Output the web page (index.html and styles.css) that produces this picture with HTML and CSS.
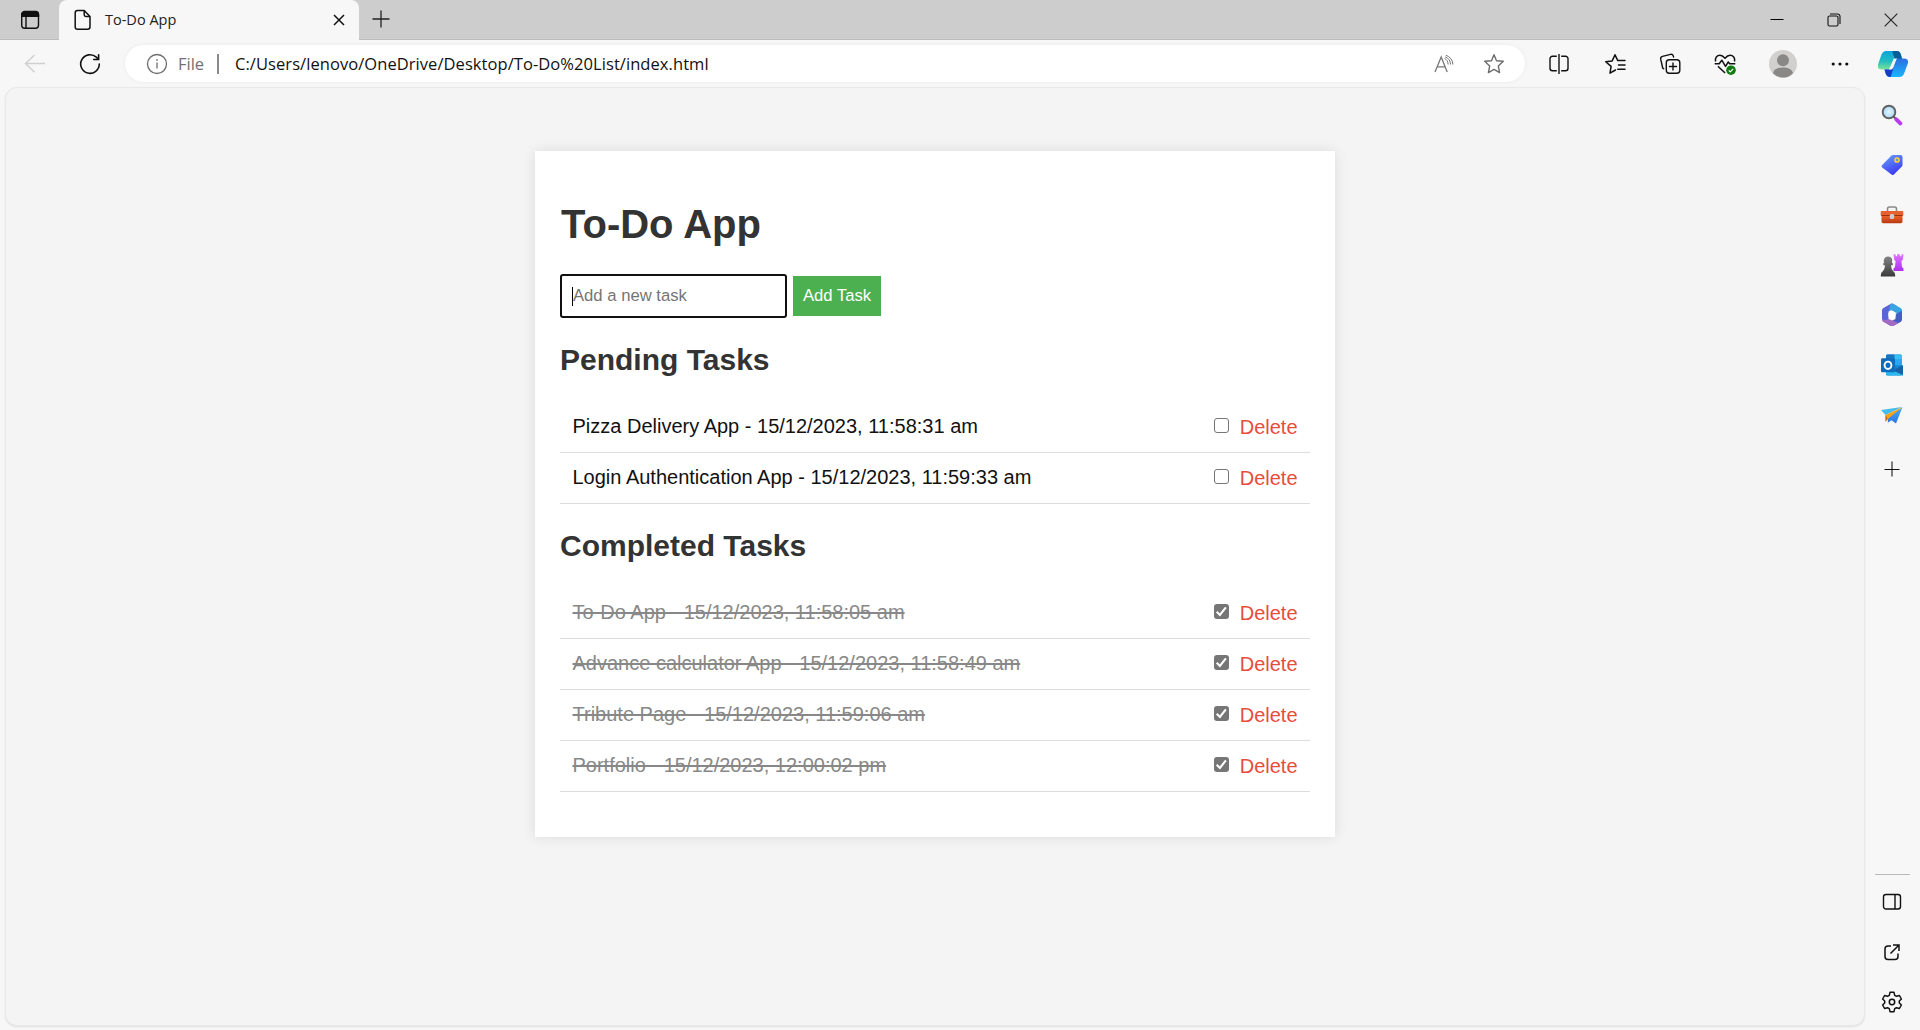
FILE: index.html
```html
<!DOCTYPE html>
<html lang="en">
<head>
<meta charset="utf-8">
<title>To-Do App</title>
<link rel="stylesheet" href="styles.css">
</head>
<body>
<header class="titlebar">
  <div class="tab-actions">
    <svg width="20" height="20" viewBox="0 0 20 20" fill="none" stroke="#111" stroke-width="1.4"><rect x="1.7" y="1.9" width="16.8" height="16.4" rx="3"/><path d="M1.7 6.2V4.5a3 3 0 0 1 3-3h10.800a3 3 0 0 1 3 3v1.700z" fill="#111"/><path d="M6 6v12"/></svg>
  </div>
  <div class="tab">
    <svg width="18" height="22" viewBox="0 0 18 22" fill="none" stroke="#111" stroke-width="1.5" stroke-linejoin="round"><path d="M3.500 1.500H10.200L16 7.500V17.800a2.500 2.500 0 0 1-2.500 2.500h-10A2.300 2.300 0 0 1 1.200 18V3.800a2.300 2.300 0 0 1 2.300-2.300z"/><path d="M10.200 1.800v4a1.700 1.700 0 0 0 1.700 1.700H16"/></svg>
    <span class="tab-title">To-Do App</span>
    <svg width="12" height="12" viewBox="0 0 12 12" stroke="#111" stroke-width="1.5"><path d="M1 1l10 10M11 1L1 11"/></svg>
  </div>
  <div class="new-tab"><svg width="18" height="18" viewBox="0 0 18 18" stroke="#222" stroke-width="1.3"><path d="M9 .5v17M.5 9h17"/></svg></div>
  <div class="window-controls">
    <svg width="14" height="14" viewBox="0 0 14 14" stroke="#000" stroke-width="1"><path d="M.5 6.500h13"/></svg>
    <svg width="14" height="14" viewBox="0 0 14 14" fill="none" stroke="#111" stroke-width="1.1"><rect x="1" y="3" width="10" height="10" rx="1.500"/><path d="M3 1h7.500A2.500 2.500 0 0 1 13 3.500V11"/></svg>
    <svg width="14" height="14" viewBox="0 0 14 14" stroke="#222" stroke-width="1.1"><path d="M.7.7l12.600 12.600M13.300.7L.7 13.300"/></svg>
  </div>
</header>
<nav class="toolbar">
  <div class="nav-button"><svg width="22" height="20" viewBox="0 0 22 20" fill="none" stroke="#cfcfcf" stroke-width="1.400"><path d="M21 9.500H1.500M10.500 1L1.500 9.500l9 8.700"/></svg></div>
  <div class="nav-button"><svg width="22" height="22" viewBox="0 0 22 22" fill="none" stroke="#111" stroke-width="1.600" stroke-linecap="round"><path d="M20.300 11A9.300 9.300 0 1 1 17.300 4.200L19.300 6.200"/><path d="M19.600 1.700V6.500H14.700"/></svg></div>
  <div class="address">
    <svg width="22" height="22" viewBox="0 0 22 22" fill="none" stroke="#6e6e6e" stroke-width="1.300"><circle cx="11" cy="11" r="9.500"/><path d="M11 9.500v6"/><path d="M11 6.200v1.600" stroke-width="1.600"/></svg>
    <span class="scheme">File</span>
    <span class="separator"></span>
    <span class="url">C:/Users/lenovo/OneDrive/Desktop/To-Do%20List/index.html</span>
    <svg class="read-aloud" width="20" height="20" viewBox="0 0 20 20" fill="none" stroke="#777" stroke-width="1.300"><path d="M1 18L7.200 3l6 15M3.200 12.800h8"/><path d="M10.500 4.500c2 .8 3.300 2.500 3.700 6M11.800 1.200c4.200 1.500 6.700 4.300 7.100 9.300M11.200 2.800c3.200 1.200 5 3.500 5.400 7.700" stroke-width="1"/></svg>
    <svg width="22" height="22" viewBox="0 0 22 22" fill="none" stroke="#6c6c6c" stroke-width="1.400" stroke-linejoin="round"><path d="M11 1.700l2.500 6 6.800.6-5 4.600 1.300 6.700L11 16.400l-5.600 3.200 1.300-6.700-5-4.600 6.800-.6z"/></svg>
  </div>
  <div class="tools">
    <svg width="22" height="22" viewBox="0 0 22 22" fill="none" stroke="#111" stroke-width="1.400"><path d="M8.800 3.200H4.500A2.500 2.500 0 0 0 2 5.700v9.600a2.500 2.500 0 0 0 2.500 2.500h4.300M13.200 3.200h4.300A2.500 2.500 0 0 1 20 5.700v9.600a2.500 2.500 0 0 1-2.500 2.500h-4.300M11 1v20"/></svg>
    <svg width="22" height="22" viewBox="0 0 22 22" fill="none" stroke="#111" stroke-width="1.500" stroke-linecap="round" stroke-linejoin="round"><path d="M11.500 17L6 20.200l1.100-6.800-5.400-4.700 6.500-.8L11 1.800l2.800 5.800h7.200M14.500 12h6.500M13.800 16.300h7.200"/></svg>
    <svg width="22" height="22" viewBox="0 0 22 22" fill="none" stroke="#111" stroke-width="1.400" stroke-linecap="round"><rect x="7.300" y="6.800" width="13.500" height="13.500" rx="3"/><path d="M14 10v7M10.500 13.500h7M4.700 15.800L3.700 15l-2-8.800A2.400 2.400 0 0 1 3.500 3.400l8-2a2.400 2.400 0 0 1 2.800 1.600l.3 1"/></svg>
    <svg width="22" height="22" viewBox="0 0 22 22" fill="none" stroke="#111" stroke-width="1.500" stroke-linejoin="round"><path d="M1.600 8.500C.7 4.800 3 2.200 6 2.200c2.300 0 3.500 1.300 5 3 1.500-1.700 2.700-3 5-3 3 0 5.400 2.600 4.500 6.300M.7 10.700h4.500l2.600-3.500 3.700 6.200 2.800-4.400 1.300 1.700h5.700M3.900 13.200l7.200 6.800"/><circle cx="17" cy="17.200" r="4.800" fill="#107c10" stroke="none"/><path d="M14.800 17.300l1.500 1.500 2.900-3" stroke="#fff" stroke-width="1.200"/></svg>
    <svg width="28" height="28" viewBox="0 0 28 28"><circle cx="14" cy="14" r="14" fill="#d2d0ce"/><circle cx="14" cy="10.300" r="6" fill="#8a8886"/><path d="M4 23.200c1.200-4.300 5-5.800 10-5.800s8.800 1.500 10 5.800A14 14 0 0 1 4 23.200z" fill="#8a8886"/></svg>
    <svg width="18" height="18" viewBox="0 0 18 18" fill="#111"><circle cx="2.200" cy="9" r="1.600"/><circle cx="9" cy="9" r="1.600"/><circle cx="15.800" cy="9" r="1.600"/></svg>
    <svg width="30" height="28" viewBox="0 0 30 28"><defs><linearGradient id="co1" x1="0" y1="0" x2="0" y2="1"><stop offset="0" stop-color="#0aa5dc"/><stop offset=".55" stop-color="#22bcc0"/><stop offset="1" stop-color="#7de396"/></linearGradient><linearGradient id="co2" x1="0" y1="0" x2="0" y2="1"><stop offset="0" stop-color="#2d6fdf"/><stop offset="1" stop-color="#19b5ff"/></linearGradient></defs><path d="M8 1h11q3 0 4 4l1.200 4.500H17l-3 9-1 1H4q-5 0-4-5L3.500 4.500Q5 1 8 1z" fill="url(#co1)"/><path d="M14.500 1H19q3 0 4 4l1.200 4.500H17L15 4z" fill="#075e99"/><path d="M22 8.500h4q4.500 0 4 4.500l-3.700 10Q25 27 21.500 27h-10q-3 0-4-4l-1-3.500H13q1.500 0 2.200-2L17.700 11q.8-2.500 4.300-2.500z" fill="url(#co2)"/><path d="M6.500 19.500H13q1.500 0 2.500-2L12.700 27Q8.500 27 7.500 23z" fill="#173cc5"/><path d="M15.800 8.500h3.800q-1.600.8-2.200 2.500L14.700 18q-.7 1.500-2.200 1.500H11z" fill="#f7f7f7"/></svg>
  </div>
</nav>
<div class="workspace">
  <main class="viewport">
    <section class="card">
      <h1 class="app-title">To-Do App</h1>
      <form class="task-form">
        <div class="field"><span class="caret"></span><input class="task-input" type="text" placeholder="Add a new task"></div>
        <button class="add-button" type="button">Add Task</button>
      </form>
      <h2 class="list-title">Pending Tasks</h2>
      <ul class="task-list">
        <li class="task"><span class="task-name">Pizza Delivery App - 15/12/2023, 11:58:31 am</span><span class="check"></span><span class="delete">Delete</span></li>
        <li class="task"><span class="task-name">Login Authentication App - 15/12/2023, 11:59:33 am</span><span class="check"></span><span class="delete">Delete</span></li>
      </ul>
      <h2 class="list-title">Completed Tasks</h2>
      <ul class="task-list">
        <li class="task done"><span class="task-name">To-Do App - 15/12/2023, 11:58:05 am</span><span class="check"><svg width="15" height="15" viewBox="0 0 15 15"><path d="M2.700 7.800l3.200 3.100 6-7.500" fill="none" stroke="#fff" stroke-width="2.100"/></svg></span><span class="delete">Delete</span></li>
        <li class="task done"><span class="task-name">Advance calculator App - 15/12/2023, 11:58:49 am</span><span class="check"><svg width="15" height="15" viewBox="0 0 15 15"><path d="M2.700 7.800l3.200 3.100 6-7.500" fill="none" stroke="#fff" stroke-width="2.100"/></svg></span><span class="delete">Delete</span></li>
        <li class="task done"><span class="task-name">Tribute Page - 15/12/2023, 11:59:06 am</span><span class="check"><svg width="15" height="15" viewBox="0 0 15 15"><path d="M2.700 7.800l3.200 3.100 6-7.500" fill="none" stroke="#fff" stroke-width="2.100"/></svg></span><span class="delete">Delete</span></li>
        <li class="task done"><span class="task-name">Portfolio - 15/12/2023, 12:00:02 pm</span><span class="check"><svg width="15" height="15" viewBox="0 0 15 15"><path d="M2.700 7.800l3.200 3.100 6-7.500" fill="none" stroke="#fff" stroke-width="2.100"/></svg></span><span class="delete">Delete</span></li>
      </ul>
    </section>
  </main>
  <aside class="sidebar">
    <div class="slot"><svg width="22" height="22" viewBox="0 0 22 22"><defs><radialGradient id="lens"><stop offset="0" stop-color="#e4f4ff"/><stop offset="1" stop-color="#a9d9f8"/></radialGradient></defs><path d="M12.500 12.500l4 4" stroke="#555" stroke-width="2"/><path d="M15.300 15.300l4 4" stroke="#b93df0" stroke-width="4" stroke-linecap="round"/><circle cx="8" cy="8" r="6.300" fill="url(#lens)" stroke="#626262" stroke-width="1.900"/></svg></div>
    <div class="slot"><svg width="22" height="22" viewBox="0 0 22 22"><defs><linearGradient id="tag" x1="0" y1="0" x2=".5" y2="1"><stop offset="0" stop-color="#6aa3ff"/><stop offset="1" stop-color="#3d3df2"/></linearGradient></defs><path d="M12 .9h7.500a2 2 0 0 1 2 2V11q0 .8-.6 1.400l-8 8a1.700 1.700 0 0 1-2.400 0L1.200 13.500a1.700 1.700 0 0 1 0-2.400L10.500 1.500Q11 .9 12 .9z" fill="url(#tag)"/><circle cx="16" cy="6" r="2.100" fill="#6e8df0" stroke="#ffd02f" stroke-width="1.500"/></svg></div>
    <div class="slot"><svg width="24" height="22" viewBox="0 0 24 22"><defs><linearGradient id="box" x1="0" y1="0" x2="0" y2="1"><stop offset="0" stop-color="#ee6329"/><stop offset="1" stop-color="#b83711"/></linearGradient></defs><path d="M7.500 7V5q0-2 2-2h5q2 0 2 2v2" fill="none" stroke="#888" stroke-width="1.600"/><rect x=".7" y="7" width="22.600" height="5" rx="1" fill="#e8602e"/><path d="M1.500 11.500h21V17.500a1.800 1.800 0 0 1-1.800 1.800H3.300a1.800 1.800 0 0 1-1.800-1.800z" fill="url(#box)"/><path d="M1.500 11.500h21" stroke="#983010"/><rect x="9.800" y="10" width="4.400" height="5" rx="1.500" fill="#ccc"/></svg></div>
    <div class="slot"><svg width="24" height="24" viewBox="0 0 24 24"><defs><linearGradient id="rook" x1="0" y1="0" x2="0" y2="1"><stop offset="0" stop-color="#df72ff"/><stop offset="1" stop-color="#ad30ed"/></linearGradient><linearGradient id="pawn" x1="0" y1="0" x2="0" y2="1"><stop offset="0" stop-color="#848484"/><stop offset="1" stop-color="#3b3b3b"/></linearGradient></defs><path d="M13.500 1.200h2v2h1.700v-2h2.600v2h1.700v-2H23.500L22.700 7l-1.300 1 .6 6 1.500 1.500V18h-10v-2.500L15 14l.6-6-1.300-1z" fill="url(#rook)"/><path d="M8 3.500a4 4 0 0 1 3.800 6l1 .8v2H11q0 4.500 3.500 7.300.7 1 .7 3.800H.8q0-2.800.7-3.800Q5 16.800 5 12.300H3.300v-2l1-.8A4 4 0 0 1 8 3.500z" fill="url(#pawn)"/></svg></div>
    <div class="slot"><svg width="22" height="24" viewBox="0 0 22 24"><path d="M9.500 1L2 5.300Q1 6 1 7.500v9Q3 19 6.500 17l1-.7V8.500l9-5L12.500 1Q11 .2 9.500 1z" fill="#5964d7"/><path d="M9.500 1q1.500-.8 3 0L20 5.300q1 .7 1 2.200v9.500q0-4-2.500-5.300L11 7.500q-2.500-1.200-3.500 1Z" fill="#38a5e2"/><path d="M21 8v8.500q0 1.500-1 2.200l-7.500 4q-1.500.8-3 0l-4-2.300 9-4.400V11z" fill="#465dc5"/><path d="M1 15.500v1q0 1.500 1 2.200l7.500 4q1.500.8 3 0l5-2.700-10-4Q4 19 1 15.500z" fill="#a46ac2"/><circle cx="11" cy="12" r="3.700" fill="#fff"/></svg></div>
    <div class="slot"><svg width="22" height="22" viewBox="0 0 22 22"><path d="M5 2q0-1.500 1.500-1.500h13Q21 .5 21 2v18q0 1.500-1.500 1.500h-13Q5 21.500 5 20z" fill="#1687d4"/><path d="M6 .5h7.500v5.200H5V2Q5 .5 6 .5z" fill="#1975bd"/><path d="M13.500.5h6Q21 .5 21 2v3.700h-7.500z" fill="#35c1f1"/><path d="M13.500 5.700H21v5.500h-7.500z" fill="#28a8ea"/><path d="M22 11L11 17l11 4.500z" fill="#1463a8"/><path d="M5 13.500L22 21q-.5.500-2 .5h-13Q5 21.500 5 19.500z" fill="#2cb7ef"/><rect x="0" y="4.300" width="14" height="14" rx="1.300" fill="#0f6cbd"/><ellipse cx="7" cy="11.300" rx="3.400" ry="3.700" fill="none" stroke="#fff" stroke-width="1.900"/></svg></div>
    <div class="slot"><svg width="24" height="18" viewBox="0 0 24 18"><defs><linearGradient id="plane" x1="0" y1="0" x2="0" y2="1"><stop offset="0" stop-color="#45b1f4"/><stop offset="1" stop-color="#2b72e9"/></linearGradient></defs><path d="M1 4L22 1 5.500 9z" fill="#42bdf0"/><path d="M22.500 1L16 17.500l-4.500-3.200-3.700 2.400L8 11.500z" fill="url(#plane)"/><path d="M22.500 1L5.500 9v6.500L9 12z" fill="#f5a219"/><path d="M5.500 9v6.800l2.300-3z" fill="#c36b12"/></svg></div>
    <div class="slot add-slot"><svg width="16" height="16" viewBox="0 0 16 16"><path d="M8 .5v15" stroke="#555" stroke-width="1.500"/><path d="M.5 8.500h15" stroke="#111"/></svg></div>
    <div class="divider"></div>
    <div class="slot"><svg width="20" height="20" viewBox="0 0 20 20" fill="none" stroke="#111" stroke-width="1.400"><rect x="1.500" y="2.500" width="17" height="14.500" rx="2.500"/><path d="M13 2.500V17"/></svg></div>
    <div class="slot"><svg width="18" height="18" viewBox="0 0 18 18" fill="none" stroke="#111" stroke-width="1.500"><path d="M8 3H5a3 3 0 0 0-3 3v7.500a3 3 0 0 0 3 3h7a3 3 0 0 0 3-3V10.500M10 2h6v6M16 2L7.500 10.500"/></svg></div>
    <div class="slot"><svg width="22" height="22" viewBox="0 0 22 22" fill="none" stroke="#111" stroke-width="1.500" stroke-linejoin="round"><path d="M9 1.300h4l.7 3 1.800 1 2.900-.8 2 3.500-2.100 2v2l2.100 2-2 3.500-2.900-.8-1.800 1-.7 3H9l-.7-3-1.800-1-2.900.8-2-3.500 2.100-2v-2l-2.100-2 2-3.500 2.900.8 1.800-1z"/><circle cx="11" cy="11" r="2.700"/></svg></div>
  </aside>
</div>
</body>
</html>
```
FILE: styles.css
```css
* { box-sizing: border-box; }
body {
  margin: 0;
  height: 1030px;
  display: flex;
  flex-direction: column;
  overflow: hidden;
  background: #f7f7f7;
  font-family: "Liberation Sans", Arial, sans-serif;
}
svg { display: block; flex: none; }

.titlebar {
  height: 40px;
  flex: none;
  display: flex;
  background: #cdcdcd;
  box-shadow: inset 0 -1px #bdbdbd;
}
.tab-actions {
  width: 59px;
  display: flex;
  align-items: center;
  justify-content: center;
}
.tab {
  width: 300px;
  display: flex;
  align-items: center;
  padding: 0 14px 0 15px;
  border-radius: 8px 8px 0 0;
  background: #f7f7f7;
}
.tab-title {
  flex: 1;
  padding: 0 0 2px 13px;
  font: 14.5px "Open Sans", sans-serif;
  color: #222;
}
.new-tab { padding: 10px 0 0 13px; }
.window-controls {
  margin-left: auto;
  display: flex;
  align-items: center;
  gap: 43px;
  padding-right: 22px;
}

.toolbar {
  height: 47px;
  flex: none;
  display: flex;
  align-items: center;
}
.nav-button {
  width: 55px;
  display: flex;
  justify-content: center;
}
.nav-button:first-child { margin-left: 7px; }
.address {
  width: 1400px;
  height: 37px;
  margin-left: 8px;
  display: flex;
  align-items: center;
  padding: 0 20px 0 21px;
  border-radius: 19px;
  background: #fff;
  box-shadow: 0 0 4px rgba(0, 0, 0, 0.06);
  font: 16.500px "Open Sans", sans-serif;
}
.scheme { width: 39px; margin-left: 10px; color: #717171; }
.separator { width: 2px; height: 20px; background: #8a8a8a; }
.url {
  margin-left: 16px;
  color: #111;
  letter-spacing: 0.065px;
  white-space: nowrap;
}
.read-aloud { margin: 0 29px 0 auto; }
.tools {
  flex: 1;
  display: grid;
  grid-template-columns: 56px 55px 55px 55px 61px 54px 51px;
  justify-content: end;
  align-items: center;
  justify-items: center;
  padding-right: 2px;
}

.workspace { flex: 1; display: flex; min-height: 0; }
.viewport {
  width: 1860px;
  height: 939px;
  margin-left: 5px;
  padding-top: 63px;
  border: 1px solid #e9e9e9;
  border-radius: 12px;
  background: #f4f4f4;
  box-shadow: 0 1px 2px rgba(0, 0, 0, 0.1);
}
.card {
  width: 800px;
  height: 686px;
  margin: 0 auto;
  padding: 25px;
  background: #fff;
  box-shadow: 0 0 12.500px rgba(0, 0, 0, 0.1);
}
.app-title {
  margin: 25px 0 27px 1px;
  font-size: 40px;
  line-height: 46px;
  color: #333;
}
.task-form { display: flex; align-items: center; gap: 6px; }
.field {
  width: 227px;
  height: 44px;
  display: flex;
  align-items: center;
  padding-left: 10px;
  border: 2px solid #101010;
  border-radius: 3px;
}
.caret { width: 1px; height: 19px; background: #000; }
.task-input {
  width: 200px;
  padding: 0;
  border: 0;
  outline: 0;
  background: none;
  font: 16.660px "Liberation Sans", Arial, sans-serif;
}
.task-input::placeholder { color: #757575; }
.add-button {
  width: 88px;
  height: 40px;
  padding: 0;
  border: 0;
  background: #4caf50;
  color: #fff;
  font: 16.660px "Liberation Sans", Arial, sans-serif;
}
.list-title {
  margin: 25px 0;
  font-size: 30px;
  line-height: 34px;
  color: #333;
}
.task-list { margin: 0; padding: 0; list-style: none; }
.task {
  height: 51px;
  display: flex;
  align-items: center;
  padding: 0 12.500px;
  border-bottom: 1px solid #ddd;
  font-size: 20px;
  color: #111;
}
.task-name { margin: 0 auto 1px 0; }
.check {
  width: 15px;
  height: 15px;
  margin: 0 11px 3px 0;
  border: 1px solid #767676;
  border-radius: 3px;
}
.done .check { border: 0; background: #767676; }
.done .task-name { color: #888; text-decoration: line-through 2px; }
.delete { color: #e74c3c; }

.sidebar {
  width: 54px;
  padding: 3px 0;
  display: flex;
  flex-direction: column;
  align-items: center;
}
.slot {
  width: 50px;
  height: 50px;
  flex: none;
  display: flex;
  align-items: center;
  justify-content: center;
}
.add-slot { margin-top: 4px; }
.divider { width: 35px; height: 1px; margin: auto 0 2px; background: #b9b9b9; }
```
